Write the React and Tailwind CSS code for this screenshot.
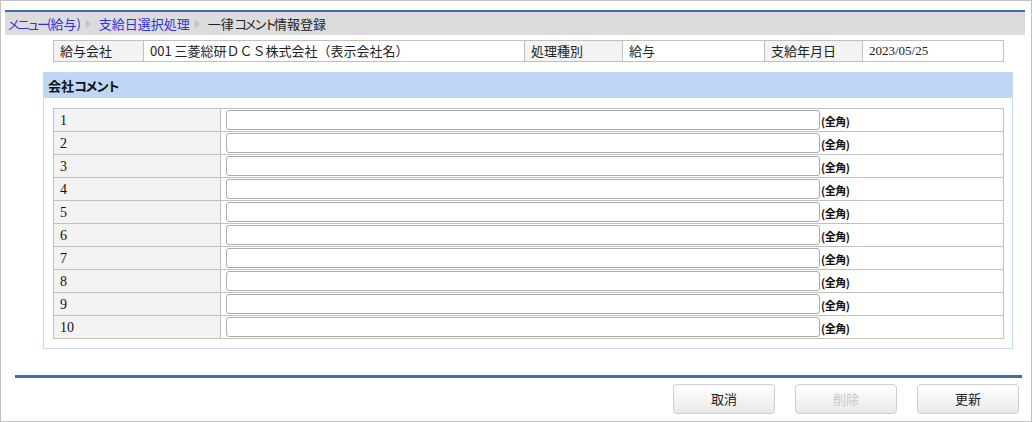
const jp = { fontFamily: '"Noto Sans CJK JP", "Liberation Sans", sans-serif' };

const Arrow = () => (
  <svg className="ml-[5px] mr-[8px] inline-block" width="5" height="8" viewBox="0 0 5 8">
    <path d="M0 0 L5 4 L0 8 Z" fill="#b3c1d6" />
  </svg>
);

const InfoCell = ({ w, label, children, serif }) => (
  <div
    className={`h-[21px] border-r border-b border-[#c0c0c0] flex items-center pl-[6px] text-[13px] text-[#222] ${label ? 'bg-[#f3f3f3]' : 'bg-white'} ${w}`}
    style={serif ? { fontFamily: '"Liberation Serif", serif' } : undefined}
  >
    {children}
  </div>
);

const Button = ({ children, disabled }) => (
  <button
    className={`w-[102px] h-[30px] rounded-[4px] border border-[#cfcfcf] bg-gradient-to-b from-white to-[#e9e9e9] text-[13px] ${disabled ? 'text-[#c8c8c8]' : 'text-[#222]'}`}
    style={jp}
  >
    {children}
  </button>
);

export default function App() {
  const rows = Array.from({ length: 10 }, (_, i) => i + 1);

  return (
    <div className="w-[1032px] h-[422px] border border-[#c0c0c0] bg-white pt-[9px] pl-[4px] pr-[6px]" style={jp}>
      <div className="h-[2px] bg-[#3a6ea5]" />
      {/* breadcrumb */}
      <div className="h-[23px] bg-[#dcdcdc] flex items-center pl-[2px] text-[13px]">
        <span className="text-[#2f2fe6]">
          <span className="tracking-[-3px]">メニュー</span>
          <span className="tracking-[-1px]">(</span>給与<span>)</span>
        </span>
        <Arrow />
        <span className="text-[#2f2fe6]">支給日選択処理</span>
        <Arrow />
        <span className="text-[#222]">
          一律<span className="tracking-[-3px]">コメント</span>情報登録
        </span>
      </div>

      {/* header info */}
      <div className="ml-[48px] mt-[5px] w-[951px] flex border-l border-t border-[#c0c0c0]">
        <InfoCell w="w-[90px]" label>給与会社</InfoCell>
        <InfoCell w="w-[381px]">001 三菱総研ＤＣＳ株式会社（表示会社名）</InfoCell>
        <InfoCell w="w-[98px]" label>処理種別</InfoCell>
        <InfoCell w="w-[142px]">給与</InfoCell>
        <InfoCell w="w-[98px]" label>支給年月日</InfoCell>
        <InfoCell w="w-[141px]" serif>2023/05/25</InfoCell>
      </div>

      {/* company comment */}
      <div className="ml-[38px] mt-[10px] w-[970px] border border-[#c5d9f5] pb-[9px]">
        <div className="h-[25px] bg-[#bfd7f5] flex items-center pl-[4px] text-[13px] font-bold text-[#111]">
          会社<span className="tracking-[-2px]">コメント</span>
        </div>
        <div className="ml-[9px] mt-[10px] w-[951px] border-l border-t border-[#c0c0c0]">
          {rows.map((n) => (
            <div key={n} className="flex h-[23px] border-b border-[#c0c0c0]">
              <div
                className="w-[167px] border-r border-[#c0c0c0] bg-[#f3f3f3] pl-[6px] flex items-center text-[14px] text-[#111]"
                style={{ fontFamily: '"Liberation Serif", serif' }}
              >
                {n}
              </div>
              <div className="flex-1 border-r border-[#c0c0c0] flex items-start pt-[1px] pl-[5px]">
                <input
                  type="text"
                  className="w-[594px] h-[20px] border border-[#ababab] rounded-[3px] bg-white outline-none"
                />
                <span className="text-[11px] font-bold text-[#111] ml-[1px] mt-[3px] tracking-[-0.5px]">(全角)</span>
              </div>
            </div>
          ))}
        </div>
      </div>

      {/* footer */}
      <div className="ml-[10px] mr-[3px] mt-[26px] h-[3px] bg-[#3a6ea5]" />
      <div className="flex justify-end gap-[20px] mt-[6px] pr-[6px]">
        <Button>取消</Button>
        <Button disabled>削除</Button>
        <Button>更新</Button>
      </div>
    </div>
  );
}
